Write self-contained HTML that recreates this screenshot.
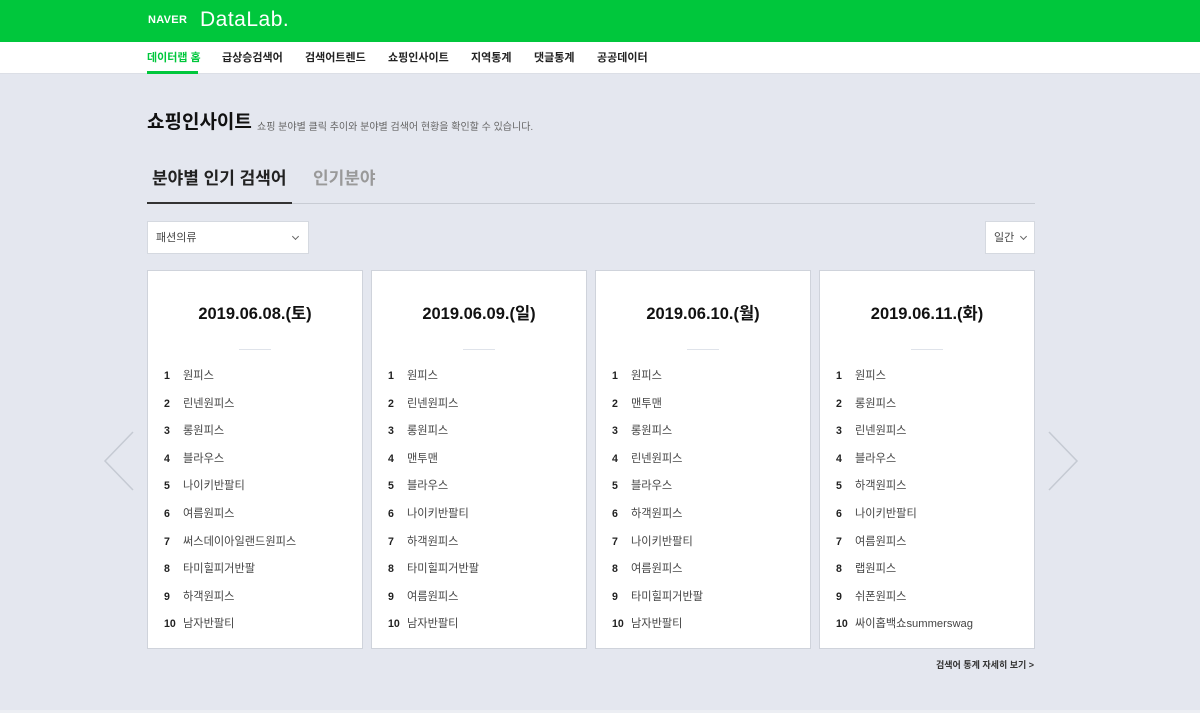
<!DOCTYPE html>
<html><head><meta charset="utf-8"><style>
*{margin:0;padding:0;box-sizing:border-box}
body{width:1200px;height:713px;overflow:hidden;background:#e4e7ef;font-family:"Liberation Sans","Noto Sans CJK KR",sans-serif;position:relative}
.hd{height:42px;background:#00c73c;position:relative}
.hd .nv{position:absolute;left:148px;top:14px;color:#fff;font-weight:900;font-size:11px;letter-spacing:0.3px}
.hd .dl{position:absolute;left:200px;top:8px;color:#fff;font-size:21px;font-weight:300;letter-spacing:0.5px}
.nav{height:32px;background:#fff;position:relative;border-bottom:1px solid #dcdfe6}
.nav span{position:absolute;top:7px;font-size:11px;font-weight:bold;color:#222}
.nav .on{color:#00c73c}
.nav .ul{position:absolute;left:147px;top:29px;width:51px;height:3px;background:#00c73c}
.t1{position:absolute;left:147px;top:107px;font-size:19px;font-weight:bold;color:#111}
.t1s{position:absolute;left:257px;top:118px;font-size:10px;color:#666}
.tab1{position:absolute;left:152px;top:164px;font-size:17px;font-weight:bold;color:#222}
.tab2{position:absolute;left:313px;top:164px;font-size:17px;font-weight:bold;color:#999}
.tl{position:absolute;left:147px;top:203px;width:888px;height:1px;background:#c8ccd4}
.tlb{position:absolute;left:147px;top:202px;width:145px;height:2px;background:#333}
.sel{position:absolute;left:147px;top:221px;width:162px;height:33px;background:#fff;border:1px solid #d5d9e0;font-size:11px;color:#444;padding:7px 0 0 8px}
.sel2{position:absolute;left:985px;top:221px;width:50px;height:33px;background:#fff;border:1px solid #d5d9e0;font-size:11px;color:#444;padding:7px 0 0 8px}
.chev{position:absolute;width:6px;height:6px;border-right:1px solid #666;border-bottom:1px solid #666;transform:rotate(45deg)}
.card{position:absolute;top:270px;width:216px;height:379px;background:#fff;border:1px solid #cfd3db}
.card h3{position:absolute;top:29px;width:100%;text-align:center;font-size:16.5px;font-weight:bold;color:#111}
.card .dv{position:absolute;left:91px;top:78px;width:32px;height:1px;background:#dfe3ea}
.card ul{list-style:none;position:absolute;top:96px;left:16px}
.card li{height:27.6px;font-size:11.2px;color:#444;white-space:nowrap}
.card li b{display:inline-block;width:19px;color:#222;font-weight:bold;font-size:10.6px}
.more{position:absolute;left:936px;top:658px;font-size:9px;color:#333;font-weight:bold}
.foot{position:absolute;left:0;top:710px;width:1200px;height:3px;background:#eceef3}
</style></head><body>
<div class="hd"><span class="nv">NAVER</span><span class="dl">DataLab.</span></div>
<div class="nav">
<span class="on" style="left:147px">데이터랩 홈</span>
<span style="left:222px">급상승검색어</span>
<span style="left:305px">검색어트렌드</span>
<span style="left:388px">쇼핑인사이트</span>
<span style="left:471px">지역통계</span>
<span style="left:534px">댓글통계</span>
<span style="left:597px">공공데이터</span>
<div class="ul"></div></div>
<div class="t1">쇼핑인사이트</div>
<div class="t1s">쇼핑 분야별 클릭 추이와 분야별 검색어 현황을 확인할 수 있습니다.</div>
<div class="tab1">분야별 인기 검색어</div><div class="tab2">인기분야</div>
<div class="tl"></div><div class="tlb"></div>
<div class="sel">패션의류<div class="chev" style="left:145px;top:12px;width:5px;height:5px"></div></div>
<div class="sel2">일간<div class="chev" style="left:35px;top:12px;width:5px;height:5px"></div></div>
<svg style="position:absolute;left:102px;top:430px" width="34" height="62"><polyline points="31,2 3,31 31,60" fill="none" stroke="#c5cad3" stroke-width="1.5"/></svg>
<svg style="position:absolute;left:1046px;top:430px" width="34" height="62"><polyline points="3,2 31,31 3,60" fill="none" stroke="#c5cad3" stroke-width="1.5"/></svg>

<div class="card" style="left:147px"><h3>2019.06.08.(토)</h3><div class="dv"></div><ul>
<li><b>1</b>원피스</li><li><b>2</b>린넨원피스</li><li><b>3</b>롱원피스</li><li><b>4</b>블라우스</li><li><b>5</b>나이키반팔티</li><li><b>6</b>여름원피스</li><li><b>7</b>써스데이아일랜드원피스</li><li><b>8</b>타미힐피거반팔</li><li><b>9</b>하객원피스</li><li><b>10</b>남자반팔티</li></ul></div>
<div class="card" style="left:371px"><h3>2019.06.09.(일)</h3><div class="dv"></div><ul>
<li><b>1</b>원피스</li><li><b>2</b>린넨원피스</li><li><b>3</b>롱원피스</li><li><b>4</b>맨투맨</li><li><b>5</b>블라우스</li><li><b>6</b>나이키반팔티</li><li><b>7</b>하객원피스</li><li><b>8</b>타미힐피거반팔</li><li><b>9</b>여름원피스</li><li><b>10</b>남자반팔티</li></ul></div>
<div class="card" style="left:595px"><h3>2019.06.10.(월)</h3><div class="dv"></div><ul>
<li><b>1</b>원피스</li><li><b>2</b>맨투맨</li><li><b>3</b>롱원피스</li><li><b>4</b>린넨원피스</li><li><b>5</b>블라우스</li><li><b>6</b>하객원피스</li><li><b>7</b>나이키반팔티</li><li><b>8</b>여름원피스</li><li><b>9</b>타미힐피거반팔</li><li><b>10</b>남자반팔티</li></ul></div>
<div class="card" style="left:819px"><h3>2019.06.11.(화)</h3><div class="dv"></div><ul>
<li><b>1</b>원피스</li><li><b>2</b>롱원피스</li><li><b>3</b>린넨원피스</li><li><b>4</b>블라우스</li><li><b>5</b>하객원피스</li><li><b>6</b>나이키반팔티</li><li><b>7</b>여름원피스</li><li><b>8</b>랩원피스</li><li><b>9</b>쉬폰원피스</li><li><b>10</b>싸이홉백쇼summerswag</li></ul></div>
<div class="more">검색어 통계 자세히 보기 &gt;</div>
<div class="foot"></div>
</body></html>
